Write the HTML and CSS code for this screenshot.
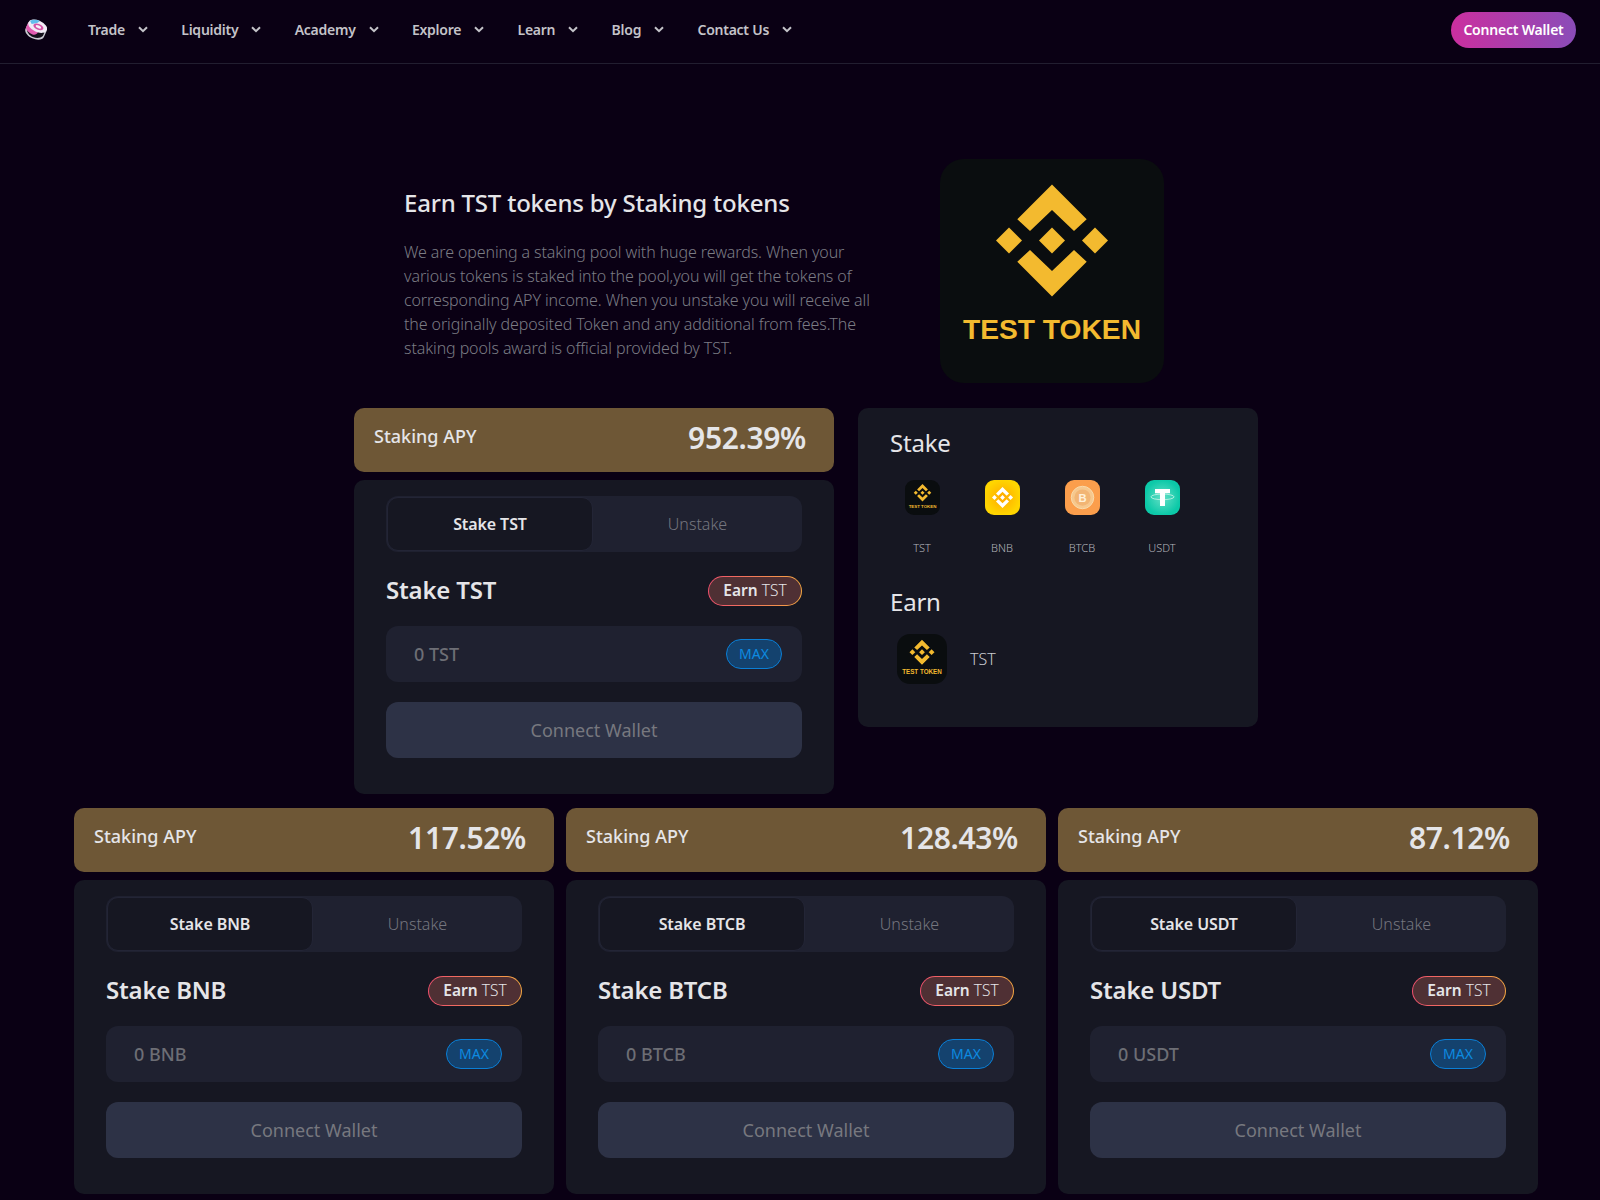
FILE: index.html
```html
<!DOCTYPE html>
<html lang="en">
<head>
<meta charset="utf-8">
<title>Staking</title>
<link rel="stylesheet" href="styles.css">
</head>
<body>
<svg class="defs" width="0" height="0" aria-hidden="true">
  <symbol id="mark" viewBox="0 0 224 224">
    <path d="M112 25.500 146.700 60.300 134 72 112 51 90 72 77.300 60.300Z"/>
    <path d="M112 137.500 146.700 102.700 134 91 112 112 90 91 77.300 102.700Z"/>
    <path d="M112 68.500 125 81.500 112 94.500 99 81.500Z"/>
    <path d="M69 68.500 82 81.500 69 94.500 56 81.500Z"/>
    <path d="M155 68.500 168 81.500 155 94.500 142 81.500Z"/>
  </symbol>
</svg>

<header class="nav">
  <svg class="brand" viewBox="0 0 24 24">
    <g transform="rotate(24 12 12)">
      <path d="M1 8v7.500C1 19 5.900 22 12 22s11-3 11-6.500V8Z" fill="#c9c9d2"/>
      <path d="M2.500 15c1.200 3.200 5.200 5.400 9.500 5.400s8.300-2.200 9.500-5.400V11H2.500Z" fill="#15111c"/>
      <path d="M1 8v6.500c3 3 6.500 3.500 9.500 3.500 2.500 0 4.500-2 4.500-4.500L6 8Z" fill="#e25cb2"/>
      <ellipse cx="12" cy="7.500" rx="11" ry="6.300" fill="#f1ebf5"/>
      <path d="M2 5.500C4 2.800 8 1.300 12 1.200L10 4.500 5 8Z" fill="#62bdec"/>
      <ellipse cx="13" cy="7.800" rx="5.800" ry="3.200" fill="#d552a6"/>
      <ellipse cx="13" cy="7.800" rx="3.200" ry="1.500" fill="#f6f0f8"/>
    </g>
  </svg>
  <nav class="menu">
    <a class="menu-item">Trade<svg class="chev" viewBox="0 0 10 7"><path d="M1 1.200 5 5.200 9 1.200"/></svg></a>
    <a class="menu-item">Liquidity<svg class="chev" viewBox="0 0 10 7"><path d="M1 1.200 5 5.200 9 1.200"/></svg></a>
    <a class="menu-item">Academy<svg class="chev" viewBox="0 0 10 7"><path d="M1 1.200 5 5.200 9 1.200"/></svg></a>
    <a class="menu-item">Explore<svg class="chev" viewBox="0 0 10 7"><path d="M1 1.200 5 5.200 9 1.200"/></svg></a>
    <a class="menu-item">Learn<svg class="chev" viewBox="0 0 10 7"><path d="M1 1.200 5 5.200 9 1.200"/></svg></a>
    <a class="menu-item">Blog<svg class="chev" viewBox="0 0 10 7"><path d="M1 1.200 5 5.200 9 1.200"/></svg></a>
    <a class="menu-item">Contact Us<svg class="chev" viewBox="0 0 10 7"><path d="M1 1.200 5 5.200 9 1.200"/></svg></a>
  </nav>
  <button class="nav-connect">Connect Wallet</button>
</header>

<main class="page">
  <section class="hero">
    <div class="hero-copy">
      <h1 class="hero-title">Earn TST tokens by Staking tokens</h1>
      <p class="hero-text">We are opening a staking pool with huge rewards. When your<br>various tokens is staked into the pool,you will get the tokens of<br>corresponding APY income. When you unstake you will receive all<br>the originally deposited Token and any additional from fees.The<br>staking pools award is official provided by TST.</p>
    </div>
    <svg class="hero-logo" viewBox="0 0 224 224">
      <rect width="224" height="224" fill="#0a0d0f"/>
      <use href="#mark" width="224" height="224" fill="#f3ba2f"/>
      <text x="112" y="180" text-anchor="middle" class="tst-word">TEST TOKEN</text>
    </svg>
  </section>

  <section class="top-row">
    <article class="pool">
      <div class="apy"><span class="apy-label">Staking APY</span><span class="apy-value">952.39%</span></div>
      <div class="card">
        <div class="tabs"><div class="tab tab-on">Stake TST</div><div class="tab">Unstake</div></div>
        <div class="title-row"><h2 class="card-title">Stake TST</h2><div class="earn"><b>Earn</b> TST</div></div>
        <div class="amount"><span>0 TST</span><span class="max">MAX</span></div>
        <button class="connect">Connect Wallet</button>
      </div>
    </article>

    <aside class="info">
      <h3 class="info-head">Stake</h3>
      <div class="coins">
        <div class="coin">
          <svg class="coin-icon" viewBox="0 0 224 224">
            <rect width="224" height="224" fill="#0a0d0f"/>
            <use href="#mark" width="224" height="224" fill="#f3ba2f"/>
            <text x="112" y="180" text-anchor="middle" class="tst-word">TEST TOKEN</text>
          </svg>
          <span class="coin-name">TST</span>
        </div>
        <div class="coin">
          <svg class="coin-icon" viewBox="0 0 224 224">
            <defs><radialGradient id="gb"><stop offset="0" stop-color="#ffa800"/><stop offset="1" stop-color="#ffd500"/></radialGradient></defs>
            <rect width="224" height="224" fill="url(#gb)"/>
            <use href="#mark" x="-22.400" y="14.200" width="269" height="269" fill="#fff"/>
          </svg>
          <span class="coin-name">BNB</span>
        </div>
        <div class="coin">
          <svg class="coin-icon" viewBox="0 0 224 224">
            <rect width="224" height="224" fill="#fb9e4c"/>
            <circle cx="112" cy="112" r="72" fill="#f6c88e" stroke="#f9dcae" stroke-width="6"/>
            <circle cx="112" cy="112" r="52" fill="#f2b574"/>
            <text x="112" y="138" text-anchor="middle" class="btc-letter">B</text>
          </svg>
          <span class="coin-name">BTCB</span>
        </div>
        <div class="coin">
          <svg class="coin-icon" viewBox="0 0 224 224">
            <defs><radialGradient id="gu"><stop offset="0" stop-color="#66dfc6"/><stop offset="1" stop-color="#0cc9a8"/></radialGradient></defs>
            <rect width="224" height="224" fill="url(#gu)"/>
            <ellipse cx="112" cy="108" rx="74" ry="18" fill="none" stroke="#b6f0e2" stroke-width="6"/>
            <path d="M64 58h96v27h-32v81H96V85H64Z" fill="#fff"/>
          </svg>
          <span class="coin-name">USDT</span>
        </div>
      </div>
      <h3 class="info-head earn-head">Earn</h3>
      <div class="reward">
        <svg class="reward-icon" viewBox="0 0 224 224">
          <rect width="224" height="224" fill="#0a0d0f"/>
          <use href="#mark" width="224" height="224" fill="#f3ba2f"/>
          <text x="112" y="180" text-anchor="middle" class="tst-word">TEST TOKEN</text>
        </svg>
        <span>TST</span>
      </div>
    </aside>
  </section>

  <section class="bottom-row">
    <article class="pool">
      <div class="apy"><span class="apy-label">Staking APY</span><span class="apy-value">117.52%</span></div>
      <div class="card">
        <div class="tabs"><div class="tab tab-on">Stake BNB</div><div class="tab">Unstake</div></div>
        <div class="title-row"><h2 class="card-title">Stake BNB</h2><div class="earn"><b>Earn</b> TST</div></div>
        <div class="amount"><span>0 BNB</span><span class="max">MAX</span></div>
        <button class="connect">Connect Wallet</button>
      </div>
    </article>
    <article class="pool">
      <div class="apy"><span class="apy-label">Staking APY</span><span class="apy-value">128.43%</span></div>
      <div class="card">
        <div class="tabs"><div class="tab tab-on">Stake BTCB</div><div class="tab">Unstake</div></div>
        <div class="title-row"><h2 class="card-title">Stake BTCB</h2><div class="earn"><b>Earn</b> TST</div></div>
        <div class="amount"><span>0 BTCB</span><span class="max">MAX</span></div>
        <button class="connect">Connect Wallet</button>
      </div>
    </article>
    <article class="pool">
      <div class="apy"><span class="apy-label">Staking APY</span><span class="apy-value">87.12%</span></div>
      <div class="card">
        <div class="tabs"><div class="tab tab-on">Stake USDT</div><div class="tab">Unstake</div></div>
        <div class="title-row"><h2 class="card-title">Stake USDT</h2><div class="earn"><b>Earn</b> TST</div></div>
        <div class="amount"><span>0 USDT</span><span class="max">MAX</span></div>
        <button class="connect">Connect Wallet</button>
      </div>
    </article>
  </section>
</main>
</body>
</html>
```
FILE: styles.css
```css
* { box-sizing: border-box; }
html, body { margin: 0; padding: 0; height: 1200px; overflow: hidden; }
body {
  background: #0a0014;
  color: #e5e5e8;
  font-family: "Noto Sans", "Open Sans", sans-serif;
}
.defs { position: absolute; }
h1, h2, h3, p { margin: 0; }
.tst-word { font-family: "Liberation Sans", sans-serif; font-weight: 700; font-size: 28.200px; fill: #f3ba2f; }
.btc-letter { font-family: "Liberation Sans", sans-serif; font-weight: 700; font-size: 72px; fill: #fff0d8; }

.nav {
  height: 64px;
  display: flex;
  align-items: center;
  padding: 0 24px 3px 25px;
  border-bottom: 1px solid #221e30;
}
.brand { width: 22px; height: 22px; flex: none; }
.menu { display: flex; margin-left: 41px; flex: 1; padding-bottom: 2px; }
.menu-item {
  display: flex;
  align-items: center;
  gap: 13px;
  font-size: 14px;
  font-weight: 600;
  letter-spacing: -0.25px;
  color: #c4c3c9;
  margin-right: 33.300px;
}
.chev { width: 10px; height: 7px; fill: none; stroke: #c4c3c9; stroke-width: 2; }
.nav-connect {
  height: 36px;
  width: 125px;
  border: 0;
  border-radius: 18px;
  background: linear-gradient(90deg, #cb2f9f, #8a4cb8);
  color: #fff;
  font: 600 14px "Noto Sans", sans-serif;
  letter-spacing: -0.2px;
  padding: 0 0 2px;
}

.page { padding: 95px 62px 0 74px; }
.hero { display: flex; margin-left: 330px; }
.hero-copy { width: 536px; padding-top: 28px; }
.hero-title { font-size: 24px; line-height: 32px; font-weight: 500; letter-spacing: -0.2px; }
.hero-text { margin-top: 21px; font-size: 16px; line-height: 24px; font-weight: 300; letter-spacing: -0.1px; color: #7b7c84; }
.hero-logo { width: 224px; height: 224px; flex: none; border-radius: 24px; }

.top-row { display: flex; justify-content: center; align-items: flex-start; gap: 24px; margin-top: 25px; }
.bottom-row { display: flex; gap: 12px; margin-top: 14px; }
.pool { width: 480px; flex: none; display: flex; flex-direction: column; gap: 8px; }

.apy {
  height: 64px;
  border-radius: 10px;
  background: #6e5736;
  display: flex;
  justify-content: space-between;
  padding: 0 28px 0 20px;
}
.apy-label { font-size: 18px; line-height: 56px; font-weight: 500; }
.apy-value { font-size: 30px; line-height: 60px; font-weight: 600; letter-spacing: -0.35px; }

.card {
  height: 314px;
  border-radius: 10px;
  background: #161722;
  padding: 16px 32px 0;
}
.tabs { height: 56px; border-radius: 12px; background: #1f2130; display: flex; padding: 1px 0 1px 1px; }
.tab { flex: 1; display: flex; align-items: center; justify-content: center; font-size: 16px; font-weight: 300; color: #75767f; }
.tab-on {
  flex: none;
  width: 206px;
  background: #161722;
  border: 1px solid #232536;
  border-radius: 11px;
  color: #e5e5e8;
  font-weight: 600;
  letter-spacing: -0.1px;
}
.title-row { display: flex; justify-content: space-between; align-items: center; height: 30px; margin-top: 24px; }
.card-title { font-size: 24px; font-weight: 600; line-height: 28px; margin-top: -3px; letter-spacing: -0.2px; }
.earn {
  height: 30px;
  width: 94px;
  border: 1px solid transparent;
  border-radius: 15px;
  background: linear-gradient(#4f3034, #4f3034) padding-box, linear-gradient(90deg, #f0506e, #f5a742) border-box;
  font-size: 15.500px;
  font-weight: 300;
  text-align: center;
  line-height: 27px;
}
.earn b { font-weight: 600; }
.amount {
  height: 56px;
  margin-top: 20px;
  border-radius: 12px;
  background: #1f2130;
  display: flex;
  justify-content: space-between;
  align-items: center;
  padding: 0 20px 0 28px;
  font-size: 18px;
  font-weight: 500;
  color: #6d6e75;
}
.max {
  width: 56px;
  height: 30px;
  border: 1px solid #0a7fd6;
  border-radius: 15px;
  background: #14426e;
  color: #0d8ae0;
  font-size: 14px;
  font-weight: 400;
  text-align: center;
  line-height: 27px;
}
.connect {
  display: block;
  width: 100%;
  height: 56px;
  margin-top: 20px;
  border: 0;
  border-radius: 12px;
  background: #2d3246;
  color: #77787f;
  font: 400 18px "Noto Sans", sans-serif;
  padding: 0;
}

.info { width: 400px; height: 319px; flex: none; border-radius: 10px; background: #161722; padding: 20px 32px 0; }
.info-head { font-size: 24px; line-height: 30px; font-weight: 400; letter-spacing: -0.2px; }
.earn-head { margin-top: 31px; }
.coins { display: flex; margin: 22px 0 0 -8px; }
.coin { width: 80px; display: flex; flex-direction: column; align-items: center; }
.coin-icon { width: 35px; height: 35px; border-radius: 9px; }
.coin-name { margin-top: 25px; font-size: 11px; line-height: 16px; font-weight: 300; color: #b4b5bb; }
.reward { display: flex; align-items: center; margin: 17px 0 0 7px; gap: 23px; font-size: 16px; font-weight: 300; color: #c9cad0; }
.reward-icon { width: 50px; height: 50px; border-radius: 13px; }
```
